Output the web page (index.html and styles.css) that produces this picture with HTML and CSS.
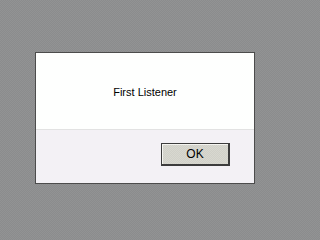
FILE: index.html
```html
<!DOCTYPE html>
<html>
<head>
<meta charset="utf-8">
<link rel="stylesheet" href="styles.css">
</head>
<body>
<div class="dialog">
  <div class="message">First Listener</div>
  <div class="footer">
    <button class="ok">OK</button>
  </div>
</div>
</body>
</html>
```
FILE: styles.css
```css
html, body {
  margin: 0;
  padding: 0;
}
body {
  width: 301px;
  height: 232px;
  overflow: hidden;
  background-color: #8e8f90;
  background-image: repeating-conic-gradient(#8b8c8d 0 25%, #929394 0 50%);
  background-size: 2px 2px;
  font-family: "Liberation Sans", Arial, sans-serif;
  padding-top: 52px;
  padding-left: 35px;
  box-sizing: border-box;
}
.dialog {
  width: 220px;
  height: 132px;
  box-sizing: border-box;
  border: 1px solid #4c4c4c;
  display: flex;
  flex-direction: column;
  background: #f3f1f5;
}
.message {
  height: 77px;
  background: #fefffe;
  border-bottom: 1px solid #e2e2e2;
  display: flex;
  align-items: center;
  justify-content: center;
  font-size: 11px;
  color: #000;
  box-sizing: border-box;
  padding-top: 1px;
}
.footer {
  flex: 1;
  display: flex;
  justify-content: flex-end;
  align-items: flex-start;
  padding-top: 13px;
  padding-right: 24px;
}
.ok {
  width: 69px;
  height: 23px;
  box-sizing: border-box;
  margin: 0;
  padding: 0;
  border-style: solid;
  border-color: #3c3c3c;
  border-width: 1px 2px 2px 1px;
  background-color: #d4d4cc;
  background-image: repeating-conic-gradient(#d0d0c8 0 25%, #d8d8d0 0 50%);
  background-size: 2px 2px;
  box-shadow: inset 1px 1px 0 #f4f4f0;
  font-family: "Liberation Sans", Arial, sans-serif;
  font-size: 12px;
  color: #000;
}
```
